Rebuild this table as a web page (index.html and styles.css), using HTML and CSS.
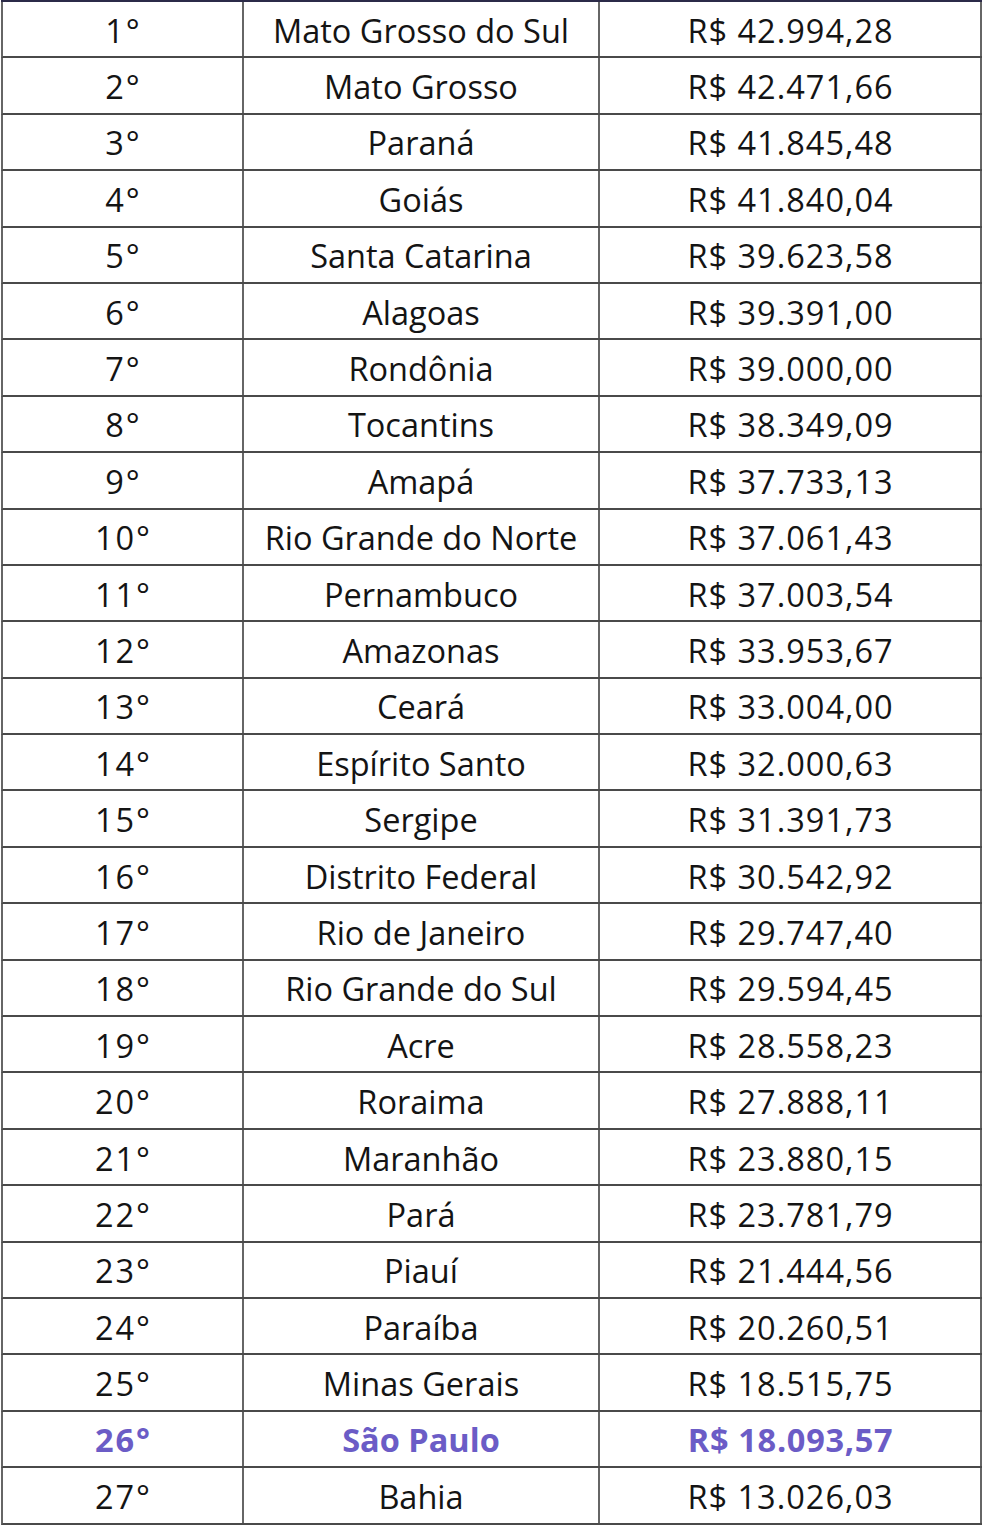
FILE: index.html
```html
<!DOCTYPE html>
<html lang="pt-BR">
<head>
<meta charset="utf-8">
<title>Ranking</title>
<link rel="stylesheet" href="styles.css">
</head>
<body>
<div class="table">
  <div class="row"><div class="cell c1">1°</div><div class="cell c2">Mato Grosso do Sul</div><div class="cell c3">R$ 42.994,28</div></div>
  <div class="row"><div class="cell c1">2°</div><div class="cell c2">Mato Grosso</div><div class="cell c3">R$ 42.471,66</div></div>
  <div class="row"><div class="cell c1">3°</div><div class="cell c2">Paraná</div><div class="cell c3">R$ 41.845,48</div></div>
  <div class="row"><div class="cell c1">4°</div><div class="cell c2">Goiás</div><div class="cell c3">R$ 41.840,04</div></div>
  <div class="row"><div class="cell c1">5°</div><div class="cell c2">Santa Catarina</div><div class="cell c3">R$ 39.623,58</div></div>
  <div class="row"><div class="cell c1">6°</div><div class="cell c2">Alagoas</div><div class="cell c3">R$ 39.391,00</div></div>
  <div class="row"><div class="cell c1">7°</div><div class="cell c2">Rondônia</div><div class="cell c3">R$ 39.000,00</div></div>
  <div class="row"><div class="cell c1">8°</div><div class="cell c2">Tocantins</div><div class="cell c3">R$ 38.349,09</div></div>
  <div class="row"><div class="cell c1">9°</div><div class="cell c2">Amapá</div><div class="cell c3">R$ 37.733,13</div></div>
  <div class="row"><div class="cell c1">10°</div><div class="cell c2">Rio Grande do Norte</div><div class="cell c3">R$ 37.061,43</div></div>
  <div class="row"><div class="cell c1">11°</div><div class="cell c2">Pernambuco</div><div class="cell c3">R$ 37.003,54</div></div>
  <div class="row"><div class="cell c1">12°</div><div class="cell c2">Amazonas</div><div class="cell c3">R$ 33.953,67</div></div>
  <div class="row"><div class="cell c1">13°</div><div class="cell c2">Ceará</div><div class="cell c3">R$ 33.004,00</div></div>
  <div class="row"><div class="cell c1">14°</div><div class="cell c2">Espírito Santo</div><div class="cell c3">R$ 32.000,63</div></div>
  <div class="row"><div class="cell c1">15°</div><div class="cell c2">Sergipe</div><div class="cell c3">R$ 31.391,73</div></div>
  <div class="row"><div class="cell c1">16°</div><div class="cell c2">Distrito Federal</div><div class="cell c3">R$ 30.542,92</div></div>
  <div class="row"><div class="cell c1">17°</div><div class="cell c2">Rio de Janeiro</div><div class="cell c3">R$ 29.747,40</div></div>
  <div class="row"><div class="cell c1">18°</div><div class="cell c2">Rio Grande do Sul</div><div class="cell c3">R$ 29.594,45</div></div>
  <div class="row"><div class="cell c1">19°</div><div class="cell c2">Acre</div><div class="cell c3">R$ 28.558,23</div></div>
  <div class="row"><div class="cell c1">20°</div><div class="cell c2">Roraima</div><div class="cell c3">R$ 27.888,11</div></div>
  <div class="row"><div class="cell c1">21°</div><div class="cell c2">Maranhão</div><div class="cell c3">R$ 23.880,15</div></div>
  <div class="row"><div class="cell c1">22°</div><div class="cell c2">Pará</div><div class="cell c3">R$ 23.781,79</div></div>
  <div class="row"><div class="cell c1">23°</div><div class="cell c2">Piauí</div><div class="cell c3">R$ 21.444,56</div></div>
  <div class="row"><div class="cell c1">24°</div><div class="cell c2">Paraíba</div><div class="cell c3">R$ 20.260,51</div></div>
  <div class="row"><div class="cell c1">25°</div><div class="cell c2">Minas Gerais</div><div class="cell c3">R$ 18.515,75</div></div>
  <div class="row highlight"><div class="cell c1">26°</div><div class="cell c2">São Paulo</div><div class="cell c3">R$ 18.093,57</div></div>
  <div class="row"><div class="cell c1">27°</div><div class="cell c2">Bahia</div><div class="cell c3">R$ 13.026,03</div></div>
</div>
</body>
</html>
```
FILE: styles.css
```css
html, body {
  margin: 0;
  padding: 0;
  background: #ffffff;
}
.table {
  margin-left: 1px;
  width: 981px;
  border-top: 2px solid #2b2a48;
  font-family: "Open Sans", "Noto Sans", sans-serif;
  font-size: 32.5px;
  color: #141414;
}
.row {
  display: grid;
  grid-template-columns: 241px 356px 382px;
  height: 56.4px;
  box-sizing: border-box;
  border-left: 2px solid #666666;
  border-bottom: 2px solid #4a4a4a;
}
.cell {
  display: flex;
  align-items: center;
  justify-content: center;
  border-right: 2px solid #666666;
  white-space: nowrap;
  padding-top: 2px;
}
.c1 {
  letter-spacing: 2px;
  padding-left: 2px;
}
.c3 {
  letter-spacing: 1px;
  padding-left: 1px;
}
.highlight .cell {
  color: #6b5cc6;
  font-weight: 700;
}
.highlight .c3 {
  letter-spacing: 0.7px;
}
```
